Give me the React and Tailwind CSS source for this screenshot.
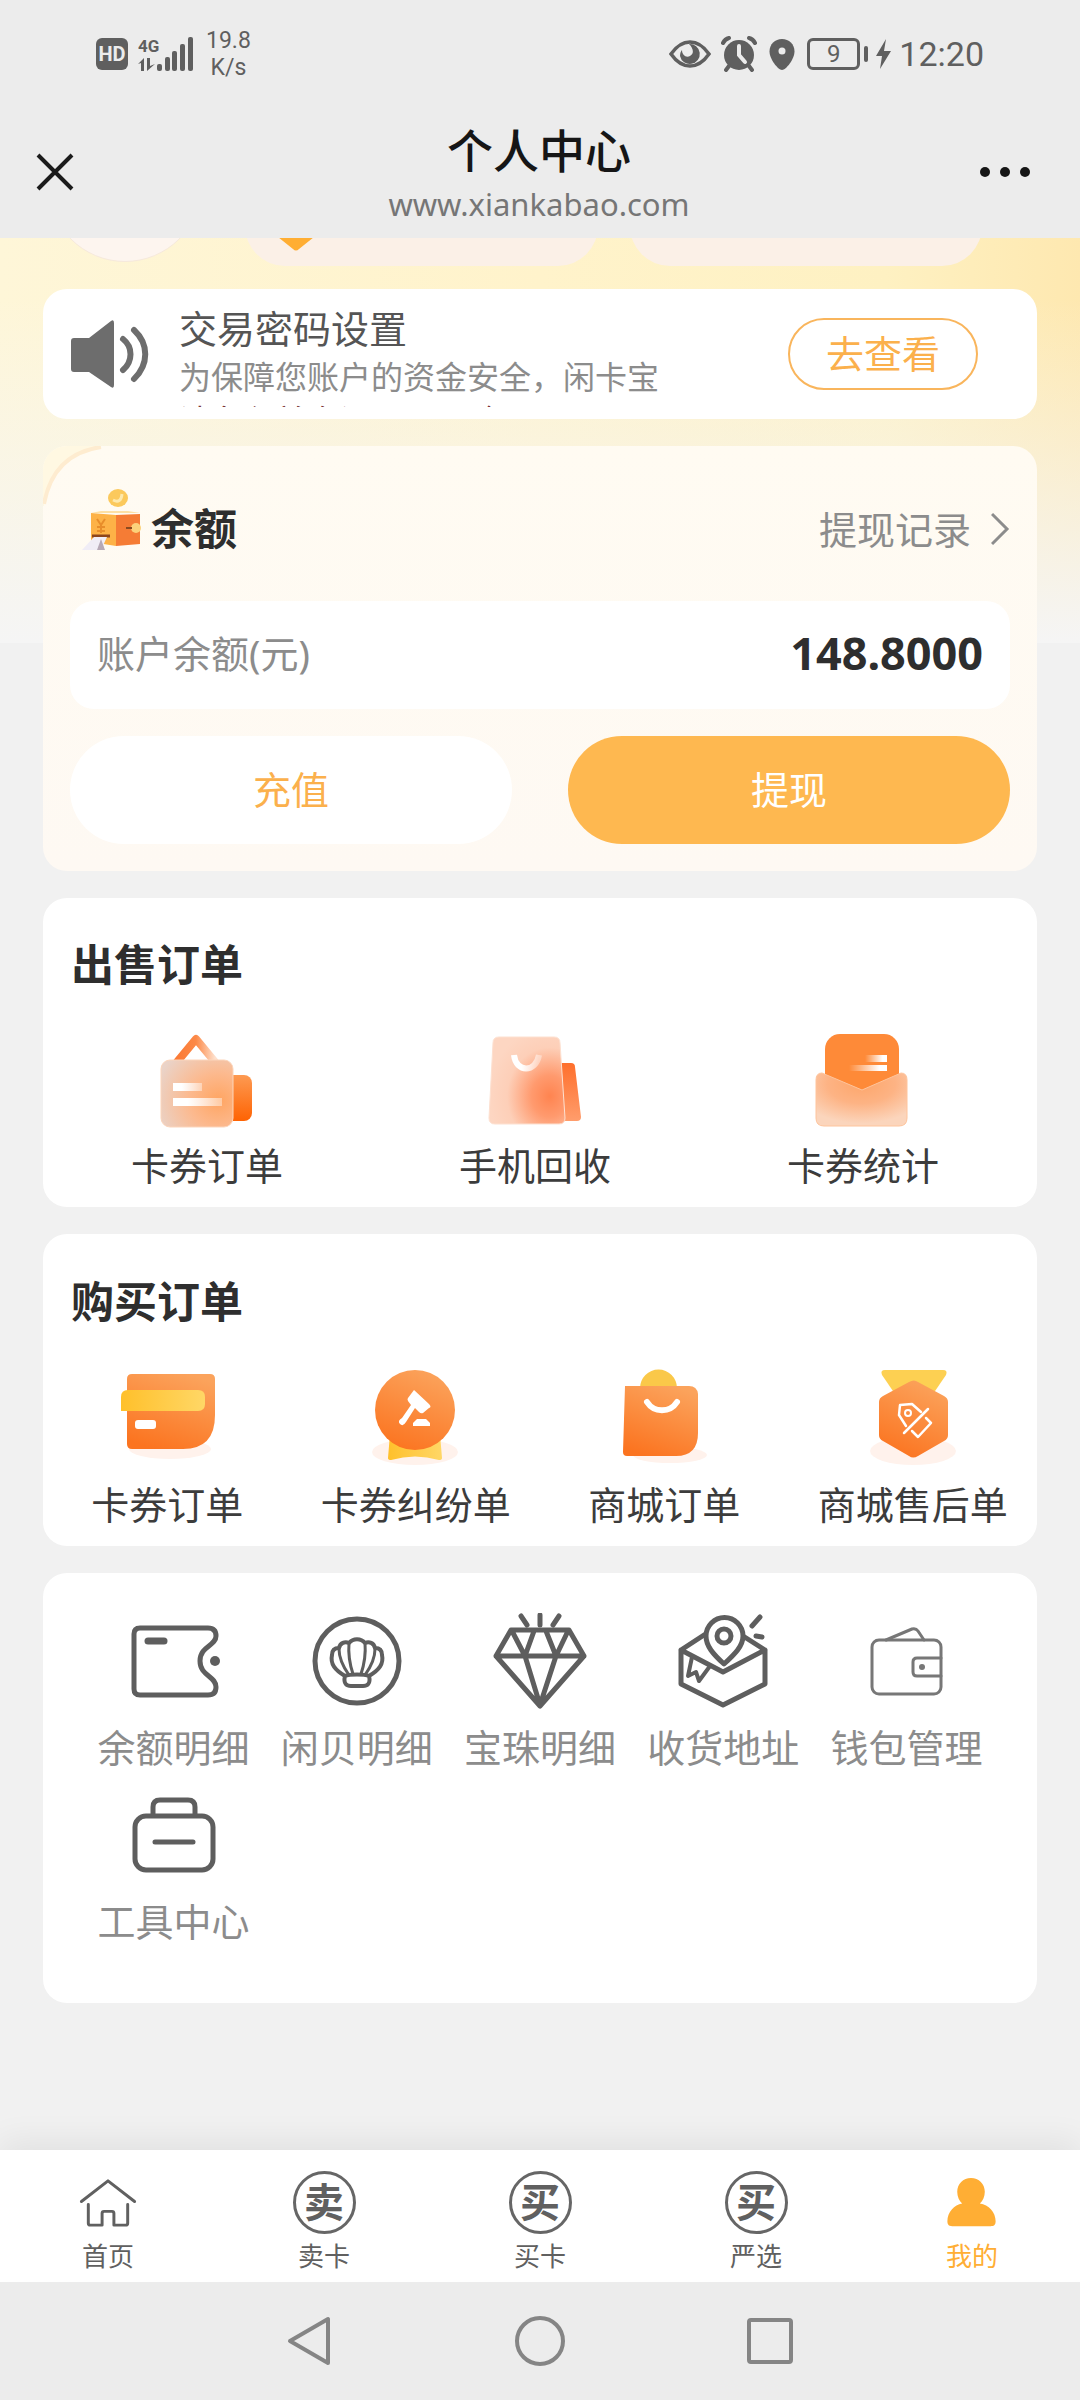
import React from "react";

/* ---------- status bar ---------- */

function StatusBar() {
  return (
    <div className="flex h-[108px] items-center justify-between px-24 text-[#5f5f5f]">
      <div className="flex items-center">
        <span className="flex h-8 w-8 items-center justify-center rounded-[6px] bg-[#5f5f5f] font-[Roboto,sans-serif] text-[20px] leading-none font-bold text-[#ececec]">
          HD
        </span>
        <svg className="ml-2.5 h-9 w-14" viewBox="0 0 56 36" fill="currentColor" aria-hidden="true">
          <text x="0" y="16" fontFamily="Roboto, sans-serif" fontSize="17" fontWeight="700">4G</text>
          <path d="M0 28l6-6v13H3v-8zM9 22h3v8l5-2-8 7z" />
          <rect x="19" y="28" width="5" height="7" rx="2" />
          <rect x="27" y="21" width="5" height="14" rx="2" />
          <rect x="34" y="15" width="5" height="20" rx="2" />
          <rect x="42" y="8" width="5" height="27" rx="2" />
          <rect x="50" y="1" width="5" height="34" rx="2" />
        </svg>
        <span className="ml-3 flex flex-col items-center font-[Roboto,sans-serif] text-[23px] leading-[27px]">
          <span>19.8</span>
          <span>K/s</span>
        </span>
      </div>
      <div className="flex items-center">
        <svg className="h-9 w-[42px]" viewBox="0 0 42 36" aria-label="护眼模式">
          <path d="M2 18C9 8 15 6 21 6s12 2 19 12c-7 10-13 12-19 12S9 28 2 18z" fill="none" stroke="currentColor" strokeWidth="3.5" />
          <path d="M20 8a10 10 0 1 1-9 12c0-3 1-5 2-6 0 5 4 8 8 6 4-2 4-7-1-12z" fill="currentColor" />
        </svg>
        <svg className="ml-2.5 h-9 w-9" viewBox="0 0 36 36" aria-label="闹钟">
          <circle cx="18" cy="19" r="15" fill="currentColor" />
          <path d="M2 7q2-4 6-5M34 7q-2-4-6-5M8 30l-3 4M28 30l3 4" stroke="currentColor" strokeWidth="4" strokeLinecap="round" fill="none" />
          <path d="M18 10v9l6 7" stroke="#ececec" strokeWidth="4" strokeLinecap="round" fill="none" />
        </svg>
        <svg className="ml-3 h-9 w-[26px]" viewBox="0 0 26 36" aria-label="定位">
          <path d="M13 3c7 0 12.500 5 12.500 12.500C25.500 23 17 34 13 34S.5 23 .5 15.500C.5 8 6 3 13 3z" fill="currentColor" />
          <circle cx="13" cy="15" r="3.500" fill="#ececec" />
        </svg>
        <span className="ml-3 flex h-8 w-[53px] items-center justify-center rounded-[6px] border-3 border-current font-[Roboto,sans-serif] text-[24px] leading-none">
          9
        </span>
        <span className="ml-1 h-4 w-1 rounded-full bg-current" />
        <svg className="ml-2 h-[30px] w-[15px]" viewBox="0 0 15 30" fill="currentColor" aria-hidden="true">
          <path d="M10 0L0 17h6L4 30l11-18H8z" />
        </svg>
        <span className="ml-2 font-[Roboto,sans-serif] text-[34px] leading-none">12:20</span>
      </div>
    </div>
  );
}

function PageHeader() {
  return (
    <div className="flex items-center justify-between pr-[50px] pl-9 pt-3 pb-3.5">
      <button type="button" aria-label="关闭" className="h-[38px] w-[50px]">
        <svg className="h-[38px] w-[38px]" viewBox="0 0 38 38" fill="none" stroke="#1b1b1b" strokeWidth="4" aria-hidden="true">
          <path d="M2 2l34 34M36 2L2 36" />
        </svg>
      </button>
      <div className="flex flex-1 flex-col items-center gap-1 pl-3">
        <h1 className="text-[46px] leading-[60px] font-medium text-[#161616]">个人中心</h1>
        <p className="text-[31px] leading-10 text-[#767676]">www.xiankabao.com</p>
      </div>
      <button type="button" aria-label="更多" className="flex w-[50px] items-center justify-between">
        <span className="h-2.5 w-2.5 rounded-full bg-[#161616]" />
        <span className="h-2.5 w-2.5 rounded-full bg-[#161616]" />
        <span className="h-2.5 w-2.5 rounded-full bg-[#161616]" />
      </button>
    </div>
  );
}

/* ---------- colour icons ---------- */

function Gradients() {
  return (
    <svg className="absolute h-0 w-0" aria-hidden="true">
      <defs>
        <linearGradient id="orange" x1="0.7" y1="0" x2="0.3" y2="1">
          <stop offset="0" stopColor="#fba35c" />
          <stop offset="1" stopColor="#fb7420" />
        </linearGradient>
        <linearGradient id="deep" x1="0" y1="0" x2="0" y2="1">
          <stop offset="0" stopColor="#fd9a52" />
          <stop offset="1" stopColor="#fe6303" />
        </linearGradient>
        <linearGradient id="coral" x1="0" y1="0" x2="0" y2="1">
          <stop offset="0" stopColor="#fe6f2c" />
          <stop offset="1" stopColor="#ff9d6c" />
        </linearGradient>
        <linearGradient id="gold" x1="0" y1="0" x2="1" y2="0">
          <stop offset="0" stopColor="#ffc02b" />
          <stop offset="1" stopColor="#ffd766" />
        </linearGradient>
        <radialGradient id="glass" cx="0.8" cy="0.6" r="0.9">
          <stop offset="0" stopColor="#ffa562" />
          <stop offset="0.45" stopColor="#fcb98e" />
          <stop offset="1" stopColor="#ead3c8" />
        </radialGradient>
        <radialGradient id="glow" cx="0.8" cy="0.68" r="0.8">
          <stop offset="0" stopColor="#ff8450" />
          <stop offset="0.3" stopColor="#ff9a6e" />
          <stop offset="0.7" stopColor="#fdcfb8" />
          <stop offset="1" stopColor="#fdd6c2" />
        </radialGradient>
        <radialGradient id="mist" cx="0.5" cy="0.2" r="0.75">
          <stop offset="0" stopColor="#fda66b" />
          <stop offset="0.5" stopColor="#fdb384" />
          <stop offset="1" stopColor="#fbd5bc" />
        </radialGradient>
        <linearGradient id="fadeRight" x1="0" y1="0" x2="1" y2="0">
          <stop offset="0.3" stopColor="#fff" />
          <stop offset="1" stopColor="#fff" stopOpacity="0.4" />
        </linearGradient>
        <linearGradient id="fadeLeft" x1="0" y1="0" x2="1" y2="0">
          <stop offset="0" stopColor="#fff" stopOpacity="0" />
          <stop offset="0.8" stopColor="#fff" />
        </linearGradient>
        <linearGradient id="hanger" x1="0" y1="0" x2="1" y2="0">
          <stop offset="0" stopColor="#fb7a35" />
          <stop offset="0.5" stopColor="#fc8947" />
          <stop offset="1" stopColor="#fee0cc" />
        </linearGradient>
      </defs>
    </svg>
  );
}

function ColorIcon({ children }) {
  return (
    <svg className="h-24 w-24 overflow-visible" viewBox="0 0 96 96" fill="none" aria-hidden="true">
      {children}
    </svg>
  );
}

const sellItems = [
  {
    label: "卡券订单",
    icon: (
      <ColorIcon>
        <path d="M18 29L37 6l19 23" stroke="url(#hanger)" strokeWidth="8" strokeLinecap="round" strokeLinejoin="round" />
        <rect x="62" y="42" width="31" height="46" rx="8" fill="url(#deep)" />
        <rect x="2" y="27" width="72" height="67" rx="9" fill="url(#glass)" stroke="#fcd5bb" />
        <rect x="14" y="50" width="29" height="8" fill="url(#fadeRight)" />
        <rect x="14" y="65" width="49" height="8" fill="url(#fadeRight)" />
      </ColorIcon>
    ),
  },
  {
    label: "手机回收",
    icon: (
      <ColorIcon>
        <path d="M66 30h18q4 0 4 4l6 50q0 4-4 4H66z" fill="url(#coral)" />
        <path d="M12 4h55q6 0 6 6l5 75q0 6-6 6H8q-6 0-6-6l4-75q0-6 6-6z" fill="url(#glow)" stroke="#fde0d0" />
        <path d="M27 22c2 18 22 18 25 0" stroke="url(#fadeRight)" strokeWidth="6" />
      </ColorIcon>
    ),
  },
  {
    label: "卡券统计",
    icon: (
      <ColorIcon>
        <rect x="10" y="1" width="74" height="66" rx="15" fill="#fe8a38" />
        <rect x="50" y="22" width="22" height="7" fill="url(#fadeLeft)" />
        <rect x="34" y="32" width="38" height="6" fill="url(#fadeLeft)" />
        <path d="M7 40l40 17 39-17q6 0 6 7v38q0 8-8 8H9q-8 0-8-8V47q0-7 6-7z" fill="url(#mist)" stroke="#fec49c" />
      </ColorIcon>
    ),
  },
];

const buyItems = [
  {
    label: "卡券订单",
    icon: (
      <ColorIcon>
        <ellipse cx="51" cy="85" rx="41" ry="10" fill="#fff2ec" />
        <path d="M13 10h78q5 0 5 5v36q0 34-32 34H13q-5 0-5-5V15q0-5 5-5z" fill="url(#orange)" />
        <path d="M9 26h70q7 0 7 7v7q0 7-7 7H2V33q0-7 7-7z" fill="url(#gold)" />
        <rect x="16" y="56" width="21" height="9" rx="3" fill="#fff" />
      </ColorIcon>
    ),
  },
  {
    label: "卡券纠纷单",
    icon: (
      <ColorIcon>
        <ellipse cx="47" cy="88" rx="43" ry="13" fill="#fff2ec" />
        <path d="M22 70h50l2 24q0 2-3 2-24-7-48 0-3 0-3-2z" fill="url(#gold)" />
        <circle cx="47" cy="46" r="40" fill="url(#orange)" />
        <path d="M46 26l15 14q3 3 0 4l-6 5q-2 1-4-1l-4-4-9 14q-3 5-6 2t2-6l9-13-3-4q-1-2 0-3z" fill="#fff" />
        <path d="M45 62v-3l4-4h9l4 4v3z" fill="#fff" />
      </ColorIcon>
    ),
  },
  {
    label: "商城订单",
    icon: (
      <ColorIcon>
        <ellipse cx="54" cy="91" rx="37" ry="8" fill="#fff2ec" />
        <path d="M24 28v-4a18 18 0 0 1 37 0v4z" fill="#fac849" />
        <path d="M9 22h64q8 0 9 8v39q0 23-22 23H11q-4 0-4-4z" fill="url(#orange)" />
        <path d="M31 38c7 11 23 11 30 0" stroke="#fff" strokeWidth="6" strokeLinecap="round" />
      </ColorIcon>
    ),
  },
  {
    label: "商城售后单",
    icon: (
      <ColorIcon>
        <ellipse cx="48" cy="87" rx="43" ry="14" fill="#fff2ec" />
        <path d="M20 6h58q5 0 3 5L68 30H30L17 11q-2-5 3-5z" fill="#fdd052" />
        <path d="M44 18q5-3 9 0l26 14q4 2 4 6v33q0 4-4 6L53 92q-5 3-9 0L18 77q-4-2-4-6V38q0-4 4-6z" fill="url(#orange)" />
        <path d="M41 62l-7-11 1-10 12-1 9 8M63 45L39 69M61 54l5 5-13 14-6-6" stroke="#fff" strokeWidth="2.500" strokeLinejoin="round" strokeLinecap="round" />
        <circle cx="43" cy="49" r="3" stroke="#fff" strokeWidth="2" />
      </ColorIcon>
    ),
  },
];

/* ---------- line icons ---------- */

function LineIcon({ thin, children }) {
  return (
    <svg
      className={thin ? "h-24 w-24 text-[#777777]" : "h-24 w-24 text-[#5e5e5e]"}
      viewBox="0 0 96 96"
      fill="none"
      stroke="currentColor"
      strokeWidth={thin ? 3 : 5}
      strokeLinejoin="round"
      strokeLinecap="round"
      aria-hidden="true"
    >
      {children}
    </svg>
  );
}

const toolItems = [
  {
    label: "余额明细",
    icon: (
      <LineIcon>
        <path d="M14 15h68q8 0 8 8c0 10-16 10-16 25s16 15 16 26q0 8-8 8H14q-6 0-6-6V21q0-6 6-6z" />
        <path d="M22 28h16" strokeWidth="7" />
        <circle cx="89" cy="48" r="5" fill="currentColor" stroke="none" />
      </LineIcon>
    ),
  },
  {
    label: "闲贝明细",
    icon: (
      <LineIcon>
        <circle cx="48" cy="48" r="42" />
        <path
          d="M36 63C26 57 21 51 23 42c0-5 3-7 7-7 1-5 6-7 10-5 4-5 12-5 16 0 4-2 9 0 10 5 4 0 7 2 7 7 2 9-3 15-13 21"
          strokeWidth="4"
        />
        <path d="M30 36c0 10 5 19 10 26M40 30c-1 12 1 22 4 31M56 30c1 12-1 22-4 31M66 36c0 10-5 19-10 26" strokeWidth="3" />
        <path d="M36 63c4-2 20-2 24 0 2 8-2 10-6 10H42c-4 0-8-2-6-10z" strokeWidth="4" />
      </LineIcon>
    ),
  },
  {
    label: "宝珠明细",
    icon: (
      <LineIcon>
        <path d="M19 17h58l15 26-44 50L4 43zM4 43h88M20 18l13 25 9-25M54 18l10 25 12-25M33 43l15 49 16-49" />
        <path d="M29 3l6 9M48 2v10M67 3l-6 9" strokeWidth="5" />
      </LineIcon>
    ),
  },
  {
    label: "收货地址",
    icon: (
      <LineIcon>
        <path d="M29 22L6 37v34l42 21 42-21V37L68 23M6 37l42 22 42-22" />
        <path d="M49 51C38 41 31 33 31 23a18 18 0 0 1 37 0c0 10-8 18-19 28z" fill="#fff" />
        <circle cx="49" cy="23" r="7" />
        <path d="M17 44l-4 19 8-4 3 9 11-15" strokeWidth="4" />
        <path d="M85 4l-8 9M81 23l6 1" />
      </LineIcon>
    ),
  },
  {
    label: "钱包管理",
    icon: (
      <LineIcon thin>
        <rect x="14" y="27" width="69" height="54" rx="7" />
        <path d="M28 27l26-11q4-1 6 2l6 9M83 45H59q-4 0-4 4v10q0 4 4 4h24" />
        <circle cx="64" cy="54" r="3" fill="currentColor" stroke="none" />
      </LineIcon>
    ),
  },
  {
    label: "工具中心",
    icon: (
      <LineIcon>
        <rect x="9" y="29" width="78" height="54" rx="11" />
        <path d="M27 28v-8q0-7 7-7h28q7 0 7 7v8M29 55h38" />
      </LineIcon>
    ),
  },
];

/* ---------- cards ---------- */

function Notice() {
  return (
    <section className="flex items-center rounded-3xl bg-white py-3 pr-[59px] pl-7">
      <svg className="h-[70px] w-[78px] shrink-0" viewBox="0 0 78 70" aria-hidden="true">
        <path d="M3 19h15L40 2q3-2 3 2v62q0 4-3 2L18 53H3q-3 0-3-3V22q0-3 3-3z" fill="#6d6d6d" />
        <path d="M52 20c10 8 10 22 0 31M63 11c15 14 15 34 0 49" fill="none" stroke="#6d6d6d" strokeWidth="6" strokeLinecap="round" />
      </svg>
      <div className="ml-[30px] min-w-0 flex-1">
        <h2 className="text-[38px] leading-[54px] text-[#555555]">交易密码设置</h2>
        <p className="h-[52px] overflow-hidden text-[32px] leading-[44px] text-[#8c8c8c]">
          为保障您账户的资金安全，闲卡宝
          <br />
          <span className="text-[#7a3535]">请务必首次设置需要验证，是否是</span>
        </p>
      </div>
      <button
        type="button"
        className="h-[72px] w-[190px] shrink-0 rounded-full border-2 border-[#f9b55c] pb-0.5 text-[38px] leading-none text-[#fbb04c]"
      >
        去查看
      </button>
    </section>
  );
}

function Balance() {
  return (
    <section className="relative overflow-hidden rounded-3xl bg-linear-to-b from-[#fffbf2] to-[#fef9f3] px-[27px] pb-[27px]">
      <svg className="absolute top-0 left-0 h-[60px] w-[60px]" viewBox="0 0 60 60" fill="#fff8e2" aria-hidden="true">
        <path d="M0 0H58Q8 6 1 60H0z" />
        <path d="M58 1Q10 8 1 58" fill="none" stroke="#feecd0" strokeWidth="4" />
      </svg>
      <div className="flex h-[155px] items-center justify-between pt-2.5">
        <div className="flex items-center pl-[9px]">
          <svg className="h-20 w-[66px]" viewBox="0 0 66 80" aria-hidden="true">
            <ellipse cx="39" cy="9" rx="10" ry="9" fill="#fbc95c" />
            <path d="M34 11q8 4 9-6" stroke="#fde9ad" strokeWidth="3" fill="none" />
            <path d="M12 24h49l-12-2H22z" fill="#fde0a4" />
            <path d="M12 24l25 2v31l-25-4z" fill="#fdb247" />
            <path d="M37 26l24-1v30l-24 2z" fill="#f57c35" />
            <path d="M18 30l4 6 4-6M22 36v8M18 38h8M18 42h8" stroke="#e88d2a" strokeWidth="2" fill="none" />
            <circle cx="57" cy="39" r="5" fill="#fcd27b" />
            <path d="M47 39h6" stroke="#8a4a20" strokeWidth="2" />
            <path d="M13 47h18" stroke="#8d451c" strokeWidth="3" />
            <path d="M15 48h13l-6 13H3z" fill="#f0edf6" />
            <path d="M22 50l4 11h-8z" fill="#b6a9b7" />
          </svg>
          <h2 className="ml-1.5 text-[43px] leading-[60px] font-bold text-[#2e2e2e]">余额</h2>
        </div>
        <button type="button" className="flex items-center gap-5 text-[38px] leading-[56px] text-[#8c8c8c]">
          提现记录
          <svg className="h-[34px] w-[19px]" viewBox="0 0 19 34" fill="none" stroke="currentColor" strokeWidth="3" aria-hidden="true">
            <path d="M1 2l15 15L1 32" />
          </svg>
        </button>
      </div>
      <div className="flex h-[108px] items-center justify-between rounded-3xl bg-white px-[27px] pb-1">
        <span className="text-[38px] leading-[56px] text-[#8c8c8c]">账户余额(元)</span>
        <strong className="text-[45px] leading-[56px] font-bold text-[#2e2e2e]">148.8000</strong>
      </div>
      <div className="mt-[27px] grid grid-cols-2 gap-14 text-[38px]">
        <button type="button" className="h-[108px] rounded-full bg-white pb-0.5 text-[#fbb04c]">
          充值
        </button>
        <button type="button" className="h-[108px] rounded-full bg-[#feb850] pb-0.5 text-white">
          提现
        </button>
      </div>
    </section>
  );
}

function SellOrders() {
  return (
    <section className="rounded-3xl bg-white pt-[35px] pb-3.5">
      <h2 className="px-7 text-[43px] leading-[64px] font-bold text-[#2e2e2e]">出售订单</h2>
      <div className="mt-9 grid grid-cols-3 pr-2.5">
        {sellItems.map((item) => (
          <a key={item.label} href="#sell" className="flex flex-col items-center gap-2">
            {item.icon}
            <span className="text-[38px] leading-[56px] text-[#3c3c3c]">{item.label}</span>
          </a>
        ))}
      </div>
    </section>
  );
}

function BuyOrders() {
  return (
    <section className="rounded-3xl bg-white pt-9 pb-3.5">
      <h2 className="px-7 text-[43px] leading-[64px] font-bold text-[#2e2e2e]">购买订单</h2>
      <div className="mt-[30px] grid grid-cols-4">
        {buyItems.map((item) => (
          <a key={item.label} href="#buy" className="flex flex-col items-center gap-4">
            {item.icon}
            <span className="text-[38px] leading-[56px] whitespace-nowrap text-[#3c3c3c]">{item.label}</span>
          </a>
        ))}
      </div>
    </section>
  );
}

function Tools() {
  return (
    <section className="grid grid-cols-5 gap-y-3 rounded-3xl bg-white px-[39px] pt-10 pb-[54px]">
      {toolItems.map((item) => (
        <a key={item.label} href="#tools" className="flex flex-col items-center gap-2.5">
          {item.icon}
          <span className="text-[38px] leading-[56px] whitespace-nowrap text-[#8c8c8c]">{item.label}</span>
        </a>
      ))}
    </section>
  );
}

/* ---------- bottom bars ---------- */

function RoundGlyph({ children }) {
  return (
    <span
      aria-hidden="true"
      className="flex h-[63px] w-[63px] items-center justify-center rounded-full border-3 border-[#666666] pb-0.5 text-[40px] leading-none font-bold"
    >
      {children}
    </span>
  );
}

const tabs = [
  {
    label: "首页",
    icon: (
      <svg className="h-[63px] w-16" viewBox="0 0 64 64" fill="none" stroke="currentColor" strokeWidth="3" strokeLinecap="round" strokeLinejoin="round" aria-hidden="true">
        <path d="M5 31L32 10l27 21M12 34v19q0 2 2 2h12V43q0-2 2-2h8q2 0 2 2v12h12q2 0 2-2V34" />
      </svg>
    ),
  },
  { label: "卖卡", icon: <RoundGlyph>卖</RoundGlyph> },
  { label: "买卡", icon: <RoundGlyph>买</RoundGlyph> },
  { label: "严选", icon: <RoundGlyph>买</RoundGlyph> },
  {
    label: "我的",
    active: true,
    icon: (
      <svg className="h-[63px] w-16" viewBox="0 0 64 64" fill="currentColor" aria-hidden="true">
        <path d="M31 7c8 0 14 6 14 14 0 5-2 9-5 12 9 1 16 9 16 18 0 4-2 5-5 5H12c-4 0-5-2-5-5 0-9 7-17 15-18-3-3-5-7-5-12 0-8 6-14 14-14z" />
      </svg>
    ),
  },
];

function TabBar() {
  return (
    <nav className="relative grid grid-cols-5 bg-white pt-[21px] pb-1.5 shadow-[0_-8px_32px_rgba(0,0,0,0.07)]">
      {tabs.map((tab) => (
        <a
          key={tab.label}
          href="#tab"
          className={
            tab.active
              ? "flex flex-col items-center gap-0.5 text-[#ffae34]"
              : "flex flex-col items-center gap-0.5 text-[#606060]"
          }
        >
          {tab.icon}
          <span className="text-[26px] leading-10">{tab.label}</span>
        </a>
      ))}
    </nav>
  );
}

function SystemNav() {
  return (
    <div className="relative flex h-[118px] items-center justify-center gap-[180px] bg-[#ececec] text-[#858585]">
      <button type="button" aria-label="返回">
        <svg className="h-[50px] w-[50px]" viewBox="0 0 50 50" fill="none" stroke="currentColor" strokeWidth="4" strokeLinejoin="round" aria-hidden="true">
          <path d="M43 3v44L5 25z" />
        </svg>
      </button>
      <button type="button" aria-label="主屏幕" className="h-[50px] w-[50px] rounded-full border-4 border-current" />
      <button type="button" aria-label="最近任务" className="flex h-[50px] w-[50px] items-center justify-center">
        <span className="h-[46px] w-[46px] rounded-[4px] border-4 border-current" />
      </button>
    </div>
  );
}

export default function App() {
  return (
    <div className="flex min-h-screen flex-col bg-[#f1f1f1] font-['Noto_Sans','Noto_Sans_CJK_SC',sans-serif]">
      <Gradients />
      <header className="bg-[#ececec]">
        <StatusBar />
        <PageHeader />
      </header>
      <main className="flex-1 bg-[linear-gradient(to_bottom,rgba(245,245,245,0)_15%,#f5f5f5_100%),linear-gradient(to_right,#fef6d8,#fff3cb_50%,#fef1c2_82%,#fee8b0)] bg-[length:100%_405px] bg-no-repeat">
        <div className="flex h-7 items-end gap-[43px] overflow-hidden pr-[98px] pl-12">
          <span className="mb-1 h-[154px] w-[154px] shrink-0 rounded-full border border-[#f6e9dc] bg-[#fdf5ef]" />
          <div className="grid flex-1 grid-cols-2 gap-8">
            <span className="flex h-20 items-end rounded-[40px] bg-[#fbf0e7] pb-[15px] pl-[33px]">
              <svg className="h-[14px] w-9" viewBox="0 0 36 14" fill="#ffae33" aria-hidden="true">
                <path d="M0 0h36L21 12q-3 3-6 0z" />
              </svg>
            </span>
            <span className="h-20 rounded-[40px] bg-[#fbf0e7]" />
          </div>
        </div>
        <div className="flex flex-col gap-[27px] px-[43px] pt-[23px] pb-7">
          <Notice />
          <Balance />
          <SellOrders />
          <BuyOrders />
          <Tools />
        </div>
      </main>
      <TabBar />
      <SystemNav />
    </div>
  );
}
